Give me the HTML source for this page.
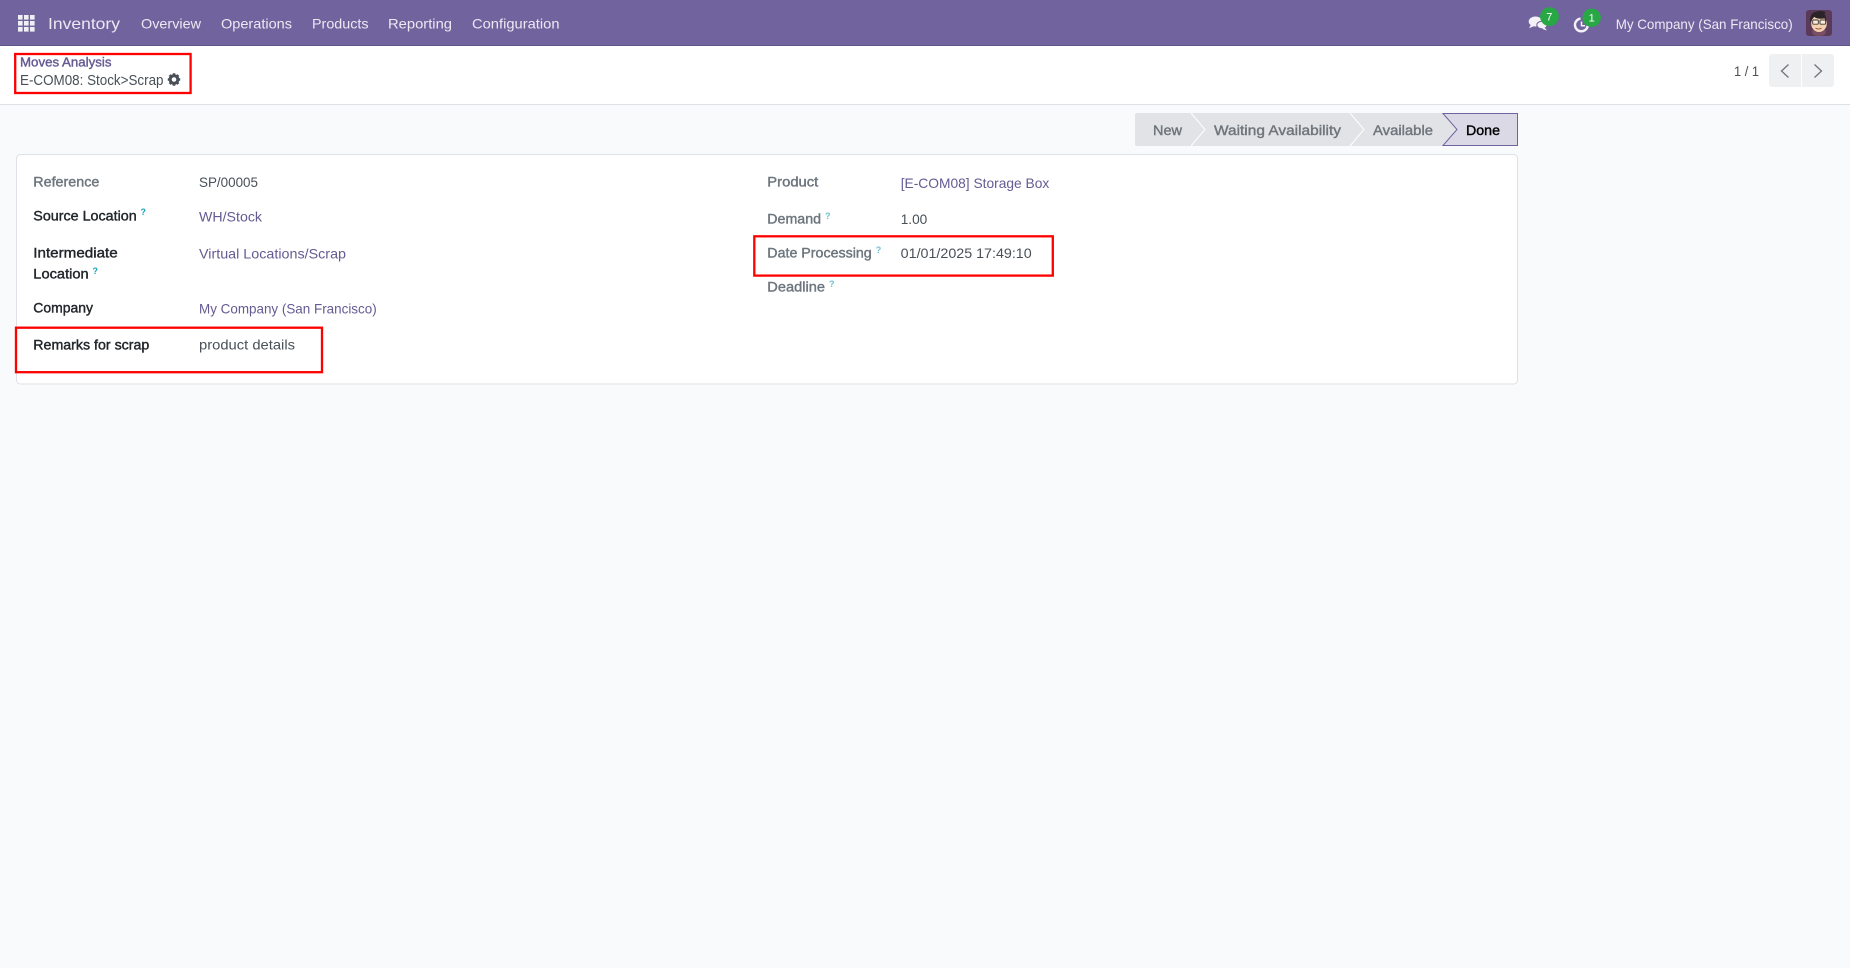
<!DOCTYPE html>
<html lang="en">
<head>
<meta charset="utf-8">
<title>Inventory</title>
<style>
html,body{margin:0;padding:0;width:1850px;height:968px;overflow:hidden;background:#f9fafb}
svg{display:block}
text{font-family:"Liberation Sans",sans-serif;font-size:14px;white-space:pre}
.nav{fill:#ece9f3;font-size:14px}
.m{stroke-width:.4;paint-order:stroke}
.d{fill:#212529;stroke:#212529}
.g{fill:#6c757d;stroke:#6c757d}
.v{fill:#495057}
.l{fill:#665a93}
.s{fill:#6f757c;stroke:#6f757c}
.q{fill:#17a2b8;font-size:9px;font-weight:bold}
.b{fill:#fff;font-size:11px}
</style>
</head>
<body>
<svg width="1850" height="968" viewBox="0 0 1850 968" xmlns="http://www.w3.org/2000/svg">
<rect width="1850" height="968" fill="#f9fafb"/>

<!-- navbar -->
<rect width="1850" height="46" fill="#71639e"/>
<rect y="45" width="1850" height="1" fill="#5f5389"/>
<g fill="#f1eff6">
<rect x="18" y="15" width="4.6" height="4.6"/><rect x="24" y="15" width="4.6" height="4.6"/><rect x="30" y="15" width="4.6" height="4.6"/>
<rect x="18" y="21" width="4.6" height="4.6"/><rect x="24" y="21" width="4.6" height="4.6"/><rect x="30" y="21" width="4.6" height="4.6"/>
<rect x="18" y="27" width="4.6" height="4.6"/><rect x="24" y="27" width="4.6" height="4.6"/><rect x="30" y="27" width="4.6" height="4.6"/>
</g>
<text class="nav" x="48" y="29" style="font-size:16px" textLength="72" lengthAdjust="spacingAndGlyphs">Inventory</text>
<text class="nav" x="141" y="28.5" textLength="60" lengthAdjust="spacingAndGlyphs">Overview</text>
<text class="nav" x="221" y="28.5" textLength="71" lengthAdjust="spacingAndGlyphs">Operations</text>
<text class="nav" x="312" y="28.5" textLength="56.5" lengthAdjust="spacingAndGlyphs">Products</text>
<text class="nav" x="388" y="28.5" textLength="64" lengthAdjust="spacingAndGlyphs">Reporting</text>
<text class="nav" x="472" y="28.5" textLength="87.5" lengthAdjust="spacingAndGlyphs">Configuration</text>

<!-- systray -->
<g fill="#f4f2f8">
<ellipse cx="1535.5" cy="21.5" rx="6.8" ry="5"/>
<path d="M1531 24.5l-2 3.7 5.2-2.2z"/>
<ellipse cx="1542" cy="25" rx="5.2" ry="3.8" stroke="#71639e" stroke-width="1"/>
<path d="M1544.5 27.5l2.5 3-5-1.6z"/>
</g>
<circle cx="1549.5" cy="16.7" r="9.4" fill="#28a745"/>
<text class="b" x="1546.3" y="20.6">7</text>
<path d="M1580.5 18.6a6.4 6.4 0 1 0 7.2 7.2" fill="none" stroke="#f4f2f8" stroke-width="2.4"/>
<path d="M1581.5 21.5v4.3h3.6" fill="none" stroke="#f4f2f8" stroke-width="1.5"/>
<circle cx="1591.7" cy="17.8" r="9.2" fill="#28a745"/>
<text class="b" x="1588.6" y="21.6">1</text>
<text class="nav" x="1615.7" y="29" textLength="177" lengthAdjust="spacingAndGlyphs">My Company (San Francisco)</text>

<!-- avatar -->
<rect x="1806" y="10" width="26" height="26" rx="3" fill="#5a3a56"/>
<path d="M1812 31c0 3 2 5 7 5s7-2 7-5l-2-2h-10z" fill="#7b4f63"/>
<ellipse cx="1819" cy="23.5" rx="7.8" ry="8.5" fill="#f4d2b0"/>
<path d="M1810.5 23c-1.2-6 1-10.5 5-11 3-1.5 8-1.3 10 .2l-1 2.2c1.5 2 2 5 1.6 8l-1.5-4c-4 .8-8.500.2-10.500-1.500-1.500 1.500-2.500 3.500-3.600 6.100z" fill="#2a2327"/>
<rect x="1812.700" y="20" width="5.600" height="4.200" rx=".8" fill="#fff" fill-opacity=".55" stroke="#3c3836" stroke-width=".9"/>
<rect x="1820" y="20" width="5.600" height="4.200" rx=".8" fill="#fff" fill-opacity=".55" stroke="#3c3836" stroke-width=".9"/>
<path d="M1815.500 28c1.500 1.300 4.500 1.300 6 0" fill="none" stroke="#a0584a" stroke-width="1"/>

<!-- control panel -->
<rect y="46" width="1850" height="58" fill="#fff"/>
<rect y="104" width="1850" height="1" fill="#dee2e6"/>
<text class="l m" x="20" y="66.700" style="font-size:13px;stroke:#665a93" textLength="91.500" lengthAdjust="spacingAndGlyphs">Moves Analysis</text>
<text class="v" x="20" y="85" style="font-size:15px" textLength="143.500" lengthAdjust="spacingAndGlyphs">E-COM08: Stock&gt;Scrap</text>
<g transform="translate(174 79.500)">
<circle r="3.800" fill="none" stroke="#495057" stroke-width="3"/>
<g stroke="#495057" stroke-width="2.600">
<path d="M0-6.200V-4.500M0 6.200V4.500M-6.200 0H-4.500M6.200 0H4.500M-4.400-4.400L-3.200-3.200M4.400 4.400L3.200 3.200M-4.400 4.400L-3.200 3.200M4.400-4.400L3.200-3.200"/>
</g>
</g>
<rect x="15.200" y="54" width="175.400" height="39" fill="none" stroke="#ff0000" stroke-width="2.300"/>

<!-- pager -->
<text class="v" x="1734" y="76" textLength="25" lengthAdjust="spacingAndGlyphs">1 / 1</text>
<rect x="1769" y="54" width="65" height="33" rx="3" fill="#eff0f2"/>
<rect x="1801" y="54" width="1" height="33" fill="#fff"/>
<path d="M1788.500 64.500l-7 6.500 7 6.500" fill="none" stroke="#6f757c" stroke-width="1.300"/>
<path d="M1814.500 64.500l7 6.500-7 6.500" fill="none" stroke="#6f757c" stroke-width="1.300"/>

<!-- statusbar -->
<path d="M1137 113H1444l14 16.500-14 16.500H1137a2 2 0 0 1-2-2V115a2 2 0 0 1 2-2z" fill="#e1e3e6"/>
<path d="M1191 113l14 16.500-14 16.500" fill="none" stroke="#fff" stroke-width="1"/>
<path d="M1350 113l14 16.500-14 16.500" fill="none" stroke="#fff" stroke-width="1"/>
<path d="M1443 113.500H1517.500V145.500H1443l14-16z" fill="#dcd9e7" stroke="#71639e" stroke-width="1"/>
<text class="s m" x="1153" y="135" textLength="29" lengthAdjust="spacingAndGlyphs">New</text>
<text class="s m" x="1214" y="135" textLength="127" lengthAdjust="spacingAndGlyphs">Waiting Availability</text>
<text class="s m" x="1373" y="135" textLength="60" lengthAdjust="spacingAndGlyphs">Available</text>
<text x="1466" y="135" style="fill:#000;stroke:#000;stroke-width:.4" textLength="34" lengthAdjust="spacingAndGlyphs">Done</text>

<!-- card -->
<rect x="16.500" y="154.500" width="1501" height="229.500" rx="4" fill="#fff" stroke="#dee2e6"/>

<text class="g m" x="33.300" y="186.700" textLength="66" lengthAdjust="spacingAndGlyphs">Reference</text>
<text class="v" x="199" y="187" textLength="59" lengthAdjust="spacingAndGlyphs">SP/00005</text>

<text class="d m" x="33.300" y="220.700" textLength="103.400" lengthAdjust="spacingAndGlyphs">Source Location</text>
<text class="q" x="140.500" y="215">?</text>
<text class="l" x="199" y="221.700" textLength="63" lengthAdjust="spacingAndGlyphs">WH/Stock</text>

<text class="d m" x="33.300" y="257.300" textLength="84.400" lengthAdjust="spacingAndGlyphs">Intermediate</text>
<text class="d m" x="33.300" y="278.300" textLength="55.400" lengthAdjust="spacingAndGlyphs">Location</text>
<text class="q" x="92.500" y="274">?</text>
<text class="l" x="199" y="258.700" textLength="147" lengthAdjust="spacingAndGlyphs">Virtual Locations/Scrap</text>

<text class="d m" x="33.300" y="312.700" textLength="59.700" lengthAdjust="spacingAndGlyphs">Company</text>
<text class="l" x="199" y="313.300" textLength="177.700" lengthAdjust="spacingAndGlyphs">My Company (San Francisco)</text>

<text class="d m" x="33.300" y="349.600" textLength="116" lengthAdjust="spacingAndGlyphs">Remarks for scrap</text>
<text class="v" x="199" y="349.600" textLength="96" lengthAdjust="spacingAndGlyphs">product details</text>
<rect x="16" y="327.700" width="306" height="44.500" fill="none" stroke="#ff0000" stroke-width="2.300"/>

<text class="g m" x="767.300" y="186.700" textLength="51" lengthAdjust="spacingAndGlyphs">Product</text>
<text class="l" x="900.700" y="188" textLength="148.600" lengthAdjust="spacingAndGlyphs">[E-COM08] Storage Box</text>

<text class="g m" x="767.300" y="223.700" textLength="53.700" lengthAdjust="spacingAndGlyphs">Demand</text>
<text class="q" x="825" y="219" style="fill:#6fc1d0">?</text>
<text class="v" x="900.700" y="224" textLength="26.600" lengthAdjust="spacingAndGlyphs">1.00</text>

<text class="g m" x="767.300" y="257.700" textLength="104.400" lengthAdjust="spacingAndGlyphs">Date Processing</text>
<text class="q" x="875.700" y="253" style="fill:#6fc1d0">?</text>
<text class="v" x="900.700" y="258" textLength="131" lengthAdjust="spacingAndGlyphs">01/01/2025 17:49:10</text>
<rect x="754.300" y="236.300" width="298.500" height="39.300" fill="none" stroke="#ff0000" stroke-width="2.300"/>

<text class="g m" x="767.300" y="291.700" textLength="57.700" lengthAdjust="spacingAndGlyphs">Deadline</text>
<text class="q" x="829" y="287" style="fill:#6fc1d0">?</text>
</svg>
</body>
</html>
